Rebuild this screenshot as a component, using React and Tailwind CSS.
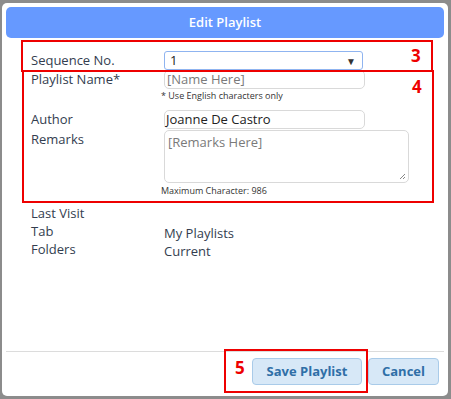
export default function App() {
  const font = { fontFamily: '"Open Sans", "Liberation Sans", sans-serif' };
  return (
    <div className="relative w-[451px] h-[399px] bg-[#8c8c8c] pt-[3px] pl-[2px] overflow-hidden" style={font}>
      <div className="w-[446px] h-[393px] bg-white rounded-[5px] flex flex-col">
        <div className="mt-[4px] mx-[4px] h-[31px] bg-[#6699ff] rounded-[5px] flex items-center justify-center text-white text-[13px] font-semibold">
          Edit Playlist
        </div>
        <div className="pt-[13px] pl-[29px] text-[13px] text-[#333d4f]">
          <div className="flex h-[19px] items-center">
            <div className="w-[133px] leading-[17px]">Sequence No.</div>
            <div className="w-[199px] h-[19px] border border-[#8fb4f0] rounded-[3px] flex items-center justify-between pl-[5px] pr-[6px] text-[#222]">
              <span className="leading-[17px]">1</span>
              <span className="text-[10px] text-[#333] leading-[10px]">▼</span>
            </div>
          </div>
          <div className="flex h-[19px] items-start">
            <div className="w-[133px] leading-[17px] pt-[1px]">Playlist Name*</div>
            <div className="w-[201px] h-[19px] border border-[#d9d9d9] rounded-[5px] flex items-center pl-[2px] text-[#7a7a7a] leading-[17px]">
              [Name Here]
            </div>
          </div>
          <div className="pl-[130px] text-[9px] leading-[12px] text-[#333] mt-[1px]">* Use English characters only</div>
          <div className="flex h-[19px] items-center mt-[8px]">
            <div className="w-[133px] leading-[17px]">Author</div>
            <div className="w-[201px] h-[19px] border border-[#d9d9d9] rounded-[5px] flex items-center pl-[1px] text-[#222] leading-[17px]">
              Joanne De Castro
            </div>
          </div>
          <div className="flex items-start mt-[1px]">
            <div className="w-[133px] leading-[17px] pt-[1px]">Remarks</div>
            <div className="relative w-[245px] h-[53px] border border-[#d9d9d9] rounded-[5px] pl-[3px] pt-[3px] text-[#7a7a7a] leading-[17px]">
              [Remarks Here]
              <svg className="absolute right-[2px] bottom-[2px]" width="8" height="8" viewBox="0 0 8 8">
                <path d="M7 2 L2 7 M7 5 L5 7" stroke="#888" strokeWidth="1" />
              </svg>
            </div>
          </div>
          <div className="pl-[130px] text-[9px] leading-[12px] text-[#333] mt-[2px]">Maximum Character: 986</div>
          <div className="mt-[7px] leading-[18px]">
            <div className="flex h-[18px]"><div className="w-[133px]">Last Visit</div></div>
            <div className="flex h-[18px]"><div className="w-[133px]">Tab</div><div className="pt-[2px]">My Playlists</div></div>
            <div className="flex h-[18px]"><div className="w-[133px]">Folders</div><div className="pt-[2px]">Current</div></div>
          </div>
        </div>
        <div className="flex-1" />
        <div className="mx-[4px] border-t border-[#dcdcdc]" />
        <div className="flex justify-end gap-[6px] pr-[9px] pt-[6px] pb-[11px]">
          <button className="w-[110px] h-[27px] bg-[#d7e8f7] border border-[#a9cbe9] rounded-[4px] text-[#2f6fa7] text-[13px] font-bold">Save Playlist</button>
          <button className="w-[71px] h-[27px] bg-[#d7e8f7] border border-[#a9cbe9] rounded-[4px] text-[#2f6fa7] text-[13px] font-bold">Cancel</button>
        </div>
      </div>
      <div className="absolute left-[21px] top-[40px] w-[412px] h-[32px] border-2 border-[#ee0000]" />
      <div className="absolute left-[22px] top-[70px] w-[412px] h-[133px] border-2 border-[#ee0000]" />
      <div className="absolute left-[224px] top-[349px] w-[144px] h-[44px] border-2 border-[#ee0000]" />
      <div className="absolute left-[411px] top-[46px] text-[17px] font-bold text-[#ee0000] leading-[20px]">3</div>
      <div className="absolute left-[412px] top-[77px] text-[17px] font-bold text-[#ee0000] leading-[20px]">4</div>
      <div className="absolute left-[235px] top-[358px] text-[17px] font-bold text-[#ee0000] leading-[20px]">5</div>
    </div>
  );
}
